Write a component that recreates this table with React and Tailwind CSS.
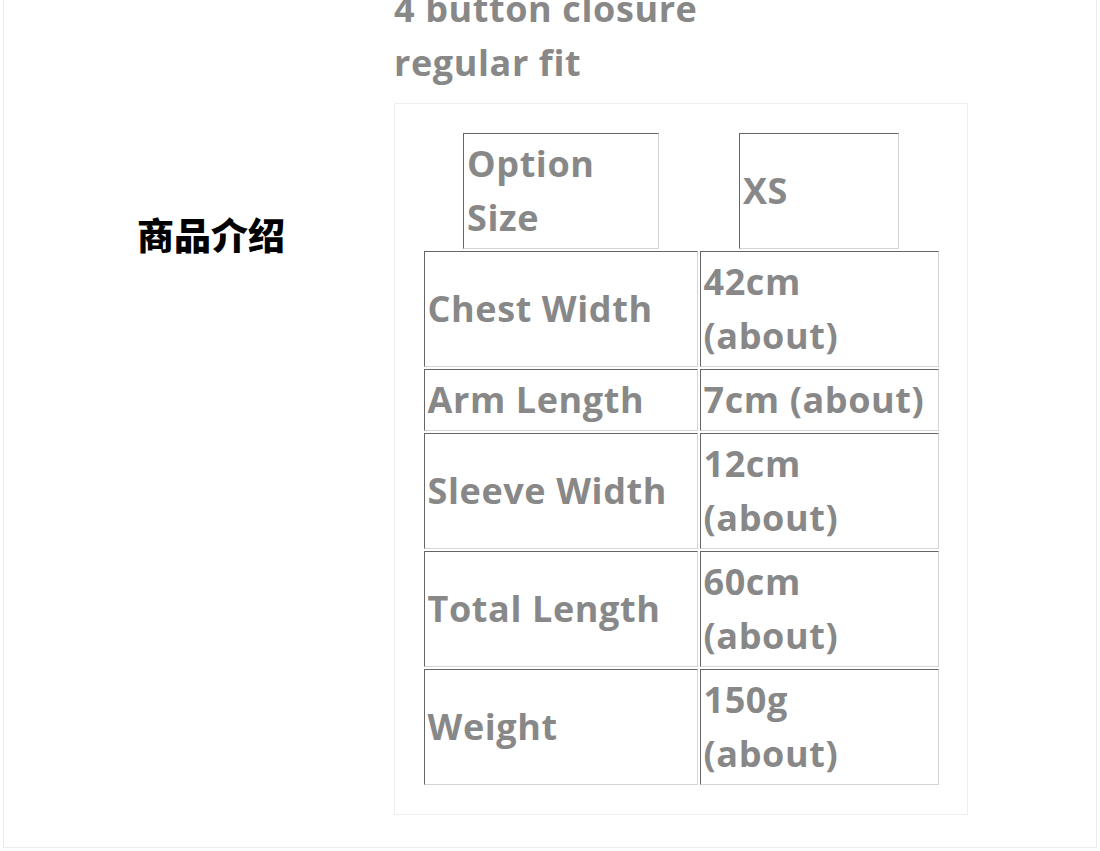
const rows = [
  { name: 'Chest Width', value: ['42cm', '(about)'] },
  { name: 'Arm Length', value: ['7cm (about)'] },
  { name: 'Sleeve Width', value: ['12cm', '(about)'] },
  { name: 'Total Length', value: ['60cm', '(about)'] },
  { name: 'Weight', value: ['150g', '(about)'] },
]

// ячейка таблицы в стиле border="1": сверху/слева тёмная линия, снизу/справа светлая
const cell =
  'border border-t-[#666] border-l-[#666] border-b-[#d4d4d4] border-r-[#d4d4d4] px-[3px] py-[3px] flex flex-col justify-center'

export default function App() {
  return (
    <div
      className="bg-white h-[851px] overflow-hidden"
      style={{ fontFamily: '"Open Sans", "Noto Sans CJK SC", sans-serif' }}
    >
      <div className="mx-[3px] h-[848px] border-x border-b border-[#ececec] flex overflow-hidden">
        {/* Левая колонка — заголовок */}
        <div className="w-[390px] shrink-0">
          <div
            className="ml-[133px] mt-[207px] text-[37px] leading-[54px] font-black text-black"
            style={{ fontFamily: '"Noto Sans CJK SC", sans-serif' }}
          >
            商品介绍
          </div>
        </div>

        {/* Правая колонка — описание и таблица размеров */}
        <div className="-mt-[18px] text-[#888] font-bold text-[36px] leading-[54px] tracking-[0.6px]">
          <p>4 button closure</p>
          <p>regular fit</p>

          <div className="mt-[13px] w-[574px] border border-[#eeeeee] p-[29px] flex flex-col items-center">
            <div className="flex gap-[80px]">
              <div className={`${cell} w-[196px] h-[116px]`}>
                <span>Option</span>
                <span>Size</span>
              </div>
              <div className={`${cell} w-[160px] h-[116px]`}>
                <span>XS</span>
              </div>
            </div>

            <div className="mt-[2px] flex flex-col gap-[2px]">
              {rows.map((r) => (
                <div key={r.name} className="flex gap-[2px]">
                  <div className={`${cell} w-[274px] whitespace-nowrap`}>
                    <span>{r.name}</span>
                  </div>
                  <div className={`${cell} w-[239px] whitespace-nowrap`}>
                    {r.value.map((v) => (
                      <span key={v}>{v}</span>
                    ))}
                  </div>
                </div>
              ))}
            </div>
          </div>
        </div>
      </div>
    </div>
  )
}
